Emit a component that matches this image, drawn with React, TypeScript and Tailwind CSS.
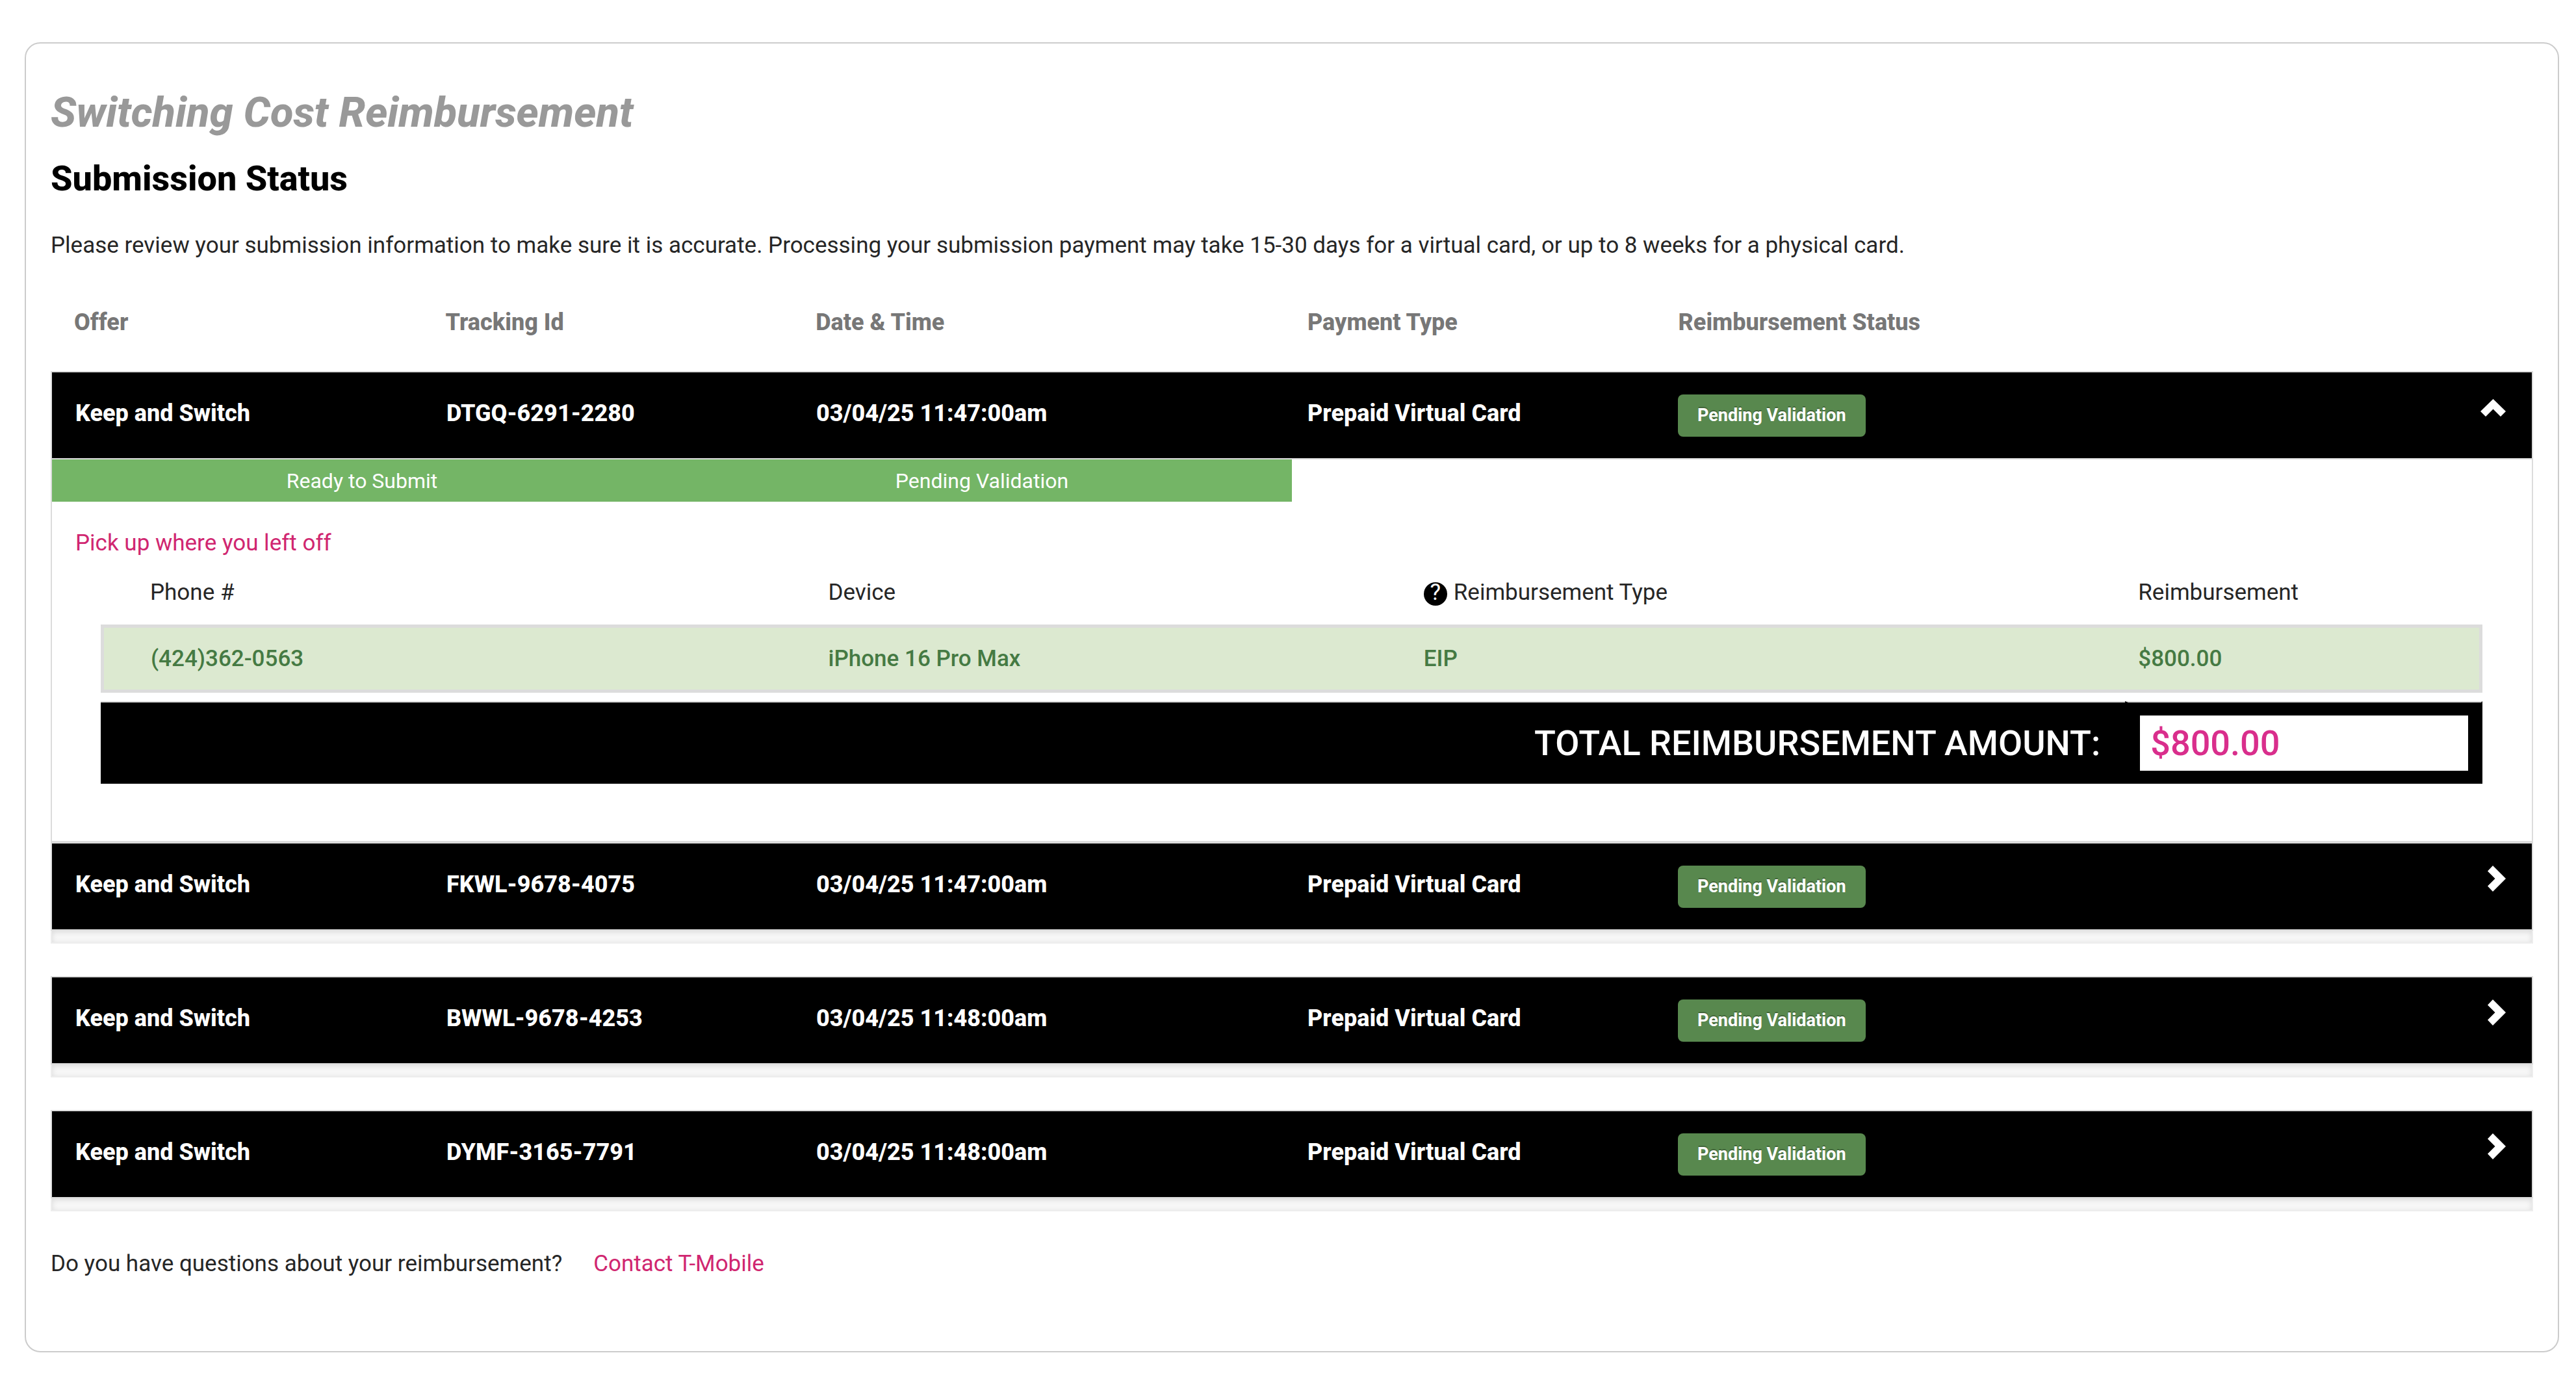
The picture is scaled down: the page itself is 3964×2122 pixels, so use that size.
import React, { useState } from "react";

type Submission = {
  offer: string;
  tracking: string;
  date: string;
  payment: string;
  status: string;
};

const submissions: Submission[] = [
  { offer: "Keep and Switch", tracking: "DTGQ-6291-2280", date: "03/04/25 11:47:00am", payment: "Prepaid Virtual Card", status: "Pending Validation" },
  { offer: "Keep and Switch", tracking: "FKWL-9678-4075", date: "03/04/25 11:47:00am", payment: "Prepaid Virtual Card", status: "Pending Validation" },
  { offer: "Keep and Switch", tracking: "BWWL-9678-4253", date: "03/04/25 11:48:00am", payment: "Prepaid Virtual Card", status: "Pending Validation" },
  { offer: "Keep and Switch", tracking: "DYMF-3165-7791", date: "03/04/25 11:48:00am", payment: "Prepaid Virtual Card", status: "Pending Validation" },
];

const columns = "grid grid-cols-[571fr_569fr_756fr_570fr_1350fr]";

function Chevron({ open }: { open: boolean }) {
  return open ? (
    <svg width="39" height="27" viewBox="0 0 39 27" fill="currentColor" aria-hidden="true">
      <path d="M19.5 0 39 19l-8 8-11.5-11.5L8 27l-8-8z" />
    </svg>
  ) : (
    <svg width="28" height="40" viewBox="0 0 28 40" fill="currentColor" aria-hidden="true">
      <path d="M28 20 8 0 0 8.500l11.500 11.500L0 31.500 8 40z" />
    </svg>
  );
}

function SubmissionRow({ item, open, onToggle }: { item: Submission; open: boolean; onToggle: () => void }) {
  return (
    <div className={`${columns} h-[132px] items-center bg-black text-[36px] font-extrabold text-white`}>
      <span className="pb-1.5 pl-9">{item.offer}</span>
      <span className="pb-1.5 pl-9">{item.tracking}</span>
      <span className="pb-1.5 pl-9">{item.date}</span>
      <span className="pb-1.5 pl-9">{item.payment}</span>
      <div className="flex items-center justify-between pr-10 pl-9">
        <span className="flex h-[65px] items-center rounded-lg bg-[#58884e] px-[30px] text-[27px] font-bold [text-shadow:0_-2px_0_rgba(0,0,0,0.25)]">
          {item.status}
        </span>
        <button type="button" aria-expanded={open} aria-label={`Details for ${item.tracking}`} onClick={onToggle} className="pb-6">
          <Chevron open={open} />
        </button>
      </div>
    </div>
  );
}

function Details() {
  return (
    <div className="pb-[88px]">
      <ol className="flex text-[32px] text-white">
        {["Ready to Submit", "Pending Validation"].map((step) => (
          <li key={step} className="flex h-[65px] w-1/4 items-center justify-center bg-[#74b566]">
            {step}
          </li>
        ))}
      </ol>
      <a href="#resume" className="mt-10 ml-9 inline-block align-top text-[#d02670]">
        Pick up where you left off
      </a>
      <div className="mt-7 mr-[76px] ml-[75px]">
        <table className="w-full table-fixed border-separate border-spacing-0 text-left">
          <thead>
            <tr>
              <th scope="col" className="w-[30%] pb-[25px] pl-[76px] font-normal">Phone #</th>
              <th scope="col" className="w-1/4 pb-[25px] pl-5 font-normal">Device</th>
              <th scope="col" className="w-[30%] pb-[25px] pl-5 font-normal">
                <span className="flex items-center gap-2.5">
                  <span className="mt-1 flex size-9 justify-center rounded-full bg-black leading-8 text-white">?</span>
                  Reimbursement Type
                </span>
              </th>
              <th scope="col" className="w-[15%] pb-[25px] pl-5 font-normal">Reimbursement</th>
            </tr>
          </thead>
          <tbody className="font-medium text-[#457a43]">
            <tr>
              <td className="border-y-5 border-l-5 border-[#dcdcdc] bg-[#dce9d0] pt-6 pb-[23px] pl-[72px]">(424)362-0563</td>
              <td className="border-y-5 border-[#dcdcdc] bg-[#dce9d0] pl-5">iPhone 16 Pro Max</td>
              <td className="border-y-5 border-[#dcdcdc] bg-[#dce9d0] pl-5">EIP</td>
              <td className="border-y-5 border-r-5 border-[#dcdcdc] bg-[#dce9d0] pl-5">$800.00</td>
            </tr>
          </tbody>
        </table>
        <div className="mt-[13px] flex text-[54px] leading-[85px] font-medium">
          <label htmlFor="total" className="flex-1 border-t-2 border-[#dcdcdc] bg-black py-5 pr-[38px] text-right text-white">
            TOTAL REIMBURSEMENT AMOUNT:
          </label>
          <div className="w-[15%] border-t-2 border-r-2 border-l-5 border-x-black border-t-[#dcdcdc] bg-black py-5 pr-5 pl-[18px]">
            <output id="total" className="block bg-white pl-4 text-[#d92e8c]">$800.00</output>
          </div>
        </div>
      </div>
    </div>
  );
}

export default function App() {
  const [openId, setOpenId] = useState("DTGQ-6291-2280");
  return (
    <div className="min-h-screen bg-white pt-[65px] pr-[26px] pb-10 pl-[38px] font-['Roboto',sans-serif] text-[35px] leading-[48px] text-[#262626]">
      <main className="rounded-3xl border-2 border-[#ccc] px-[38px] pt-[66px] pb-[110px]">
        <h1 className="text-[65px] leading-[80px] font-extrabold text-[#999] italic">Switching Cost Reimbursement</h1>
        <h2 className="mt-[30px] text-[54px] leading-[64px] font-extrabold text-black">Submission Status</h2>
        <p className="mt-[47px]">
          Please review your submission information to make sure it is accurate. Processing your submission payment may take 15-30 days for a virtual card, or up to 8 weeks for a physical card.
        </p>
        <div className={`${columns} mt-[70px] mb-[51px] text-[36px] font-extrabold text-[#777]`}>
          <span className="pl-9">Offer</span>
          <span className="pl-9">Tracking Id</span>
          <span className="pl-9">Date &amp; Time</span>
          <span className="pl-9">Payment Type</span>
          <span className="pl-9">Reimbursement Status</span>
        </div>
        {submissions.map((item, i) => {
          const open = item.tracking === openId;
          return (
            <section key={item.tracking} className={i > 1 ? "mt-[50px]" : ""}>
              <div className="border-2 border-[#dcdcdc]">
                <SubmissionRow item={item} open={open} onToggle={() => setOpenId(open ? "" : item.tracking)} />
                {open && (
                  <div className="border-t-2 border-[#dcdcdc]">
                    <Details />
                  </div>
                )}
              </div>
              {!open && <div className="h-5 border-x-2 border-b-2 border-[#ededed] bg-[#f7f7f7] shadow-[inset_0_2px_8px_rgba(0,0,0,0.12)]" />}
            </section>
          );
        })}
        <p className="mt-[57px] flex gap-12">
          Do you have questions about your reimbursement?
          <a href="#contact" className="text-[#d02670]">Contact T-Mobile</a>
        </p>
      </main>
    </div>
  );
}
